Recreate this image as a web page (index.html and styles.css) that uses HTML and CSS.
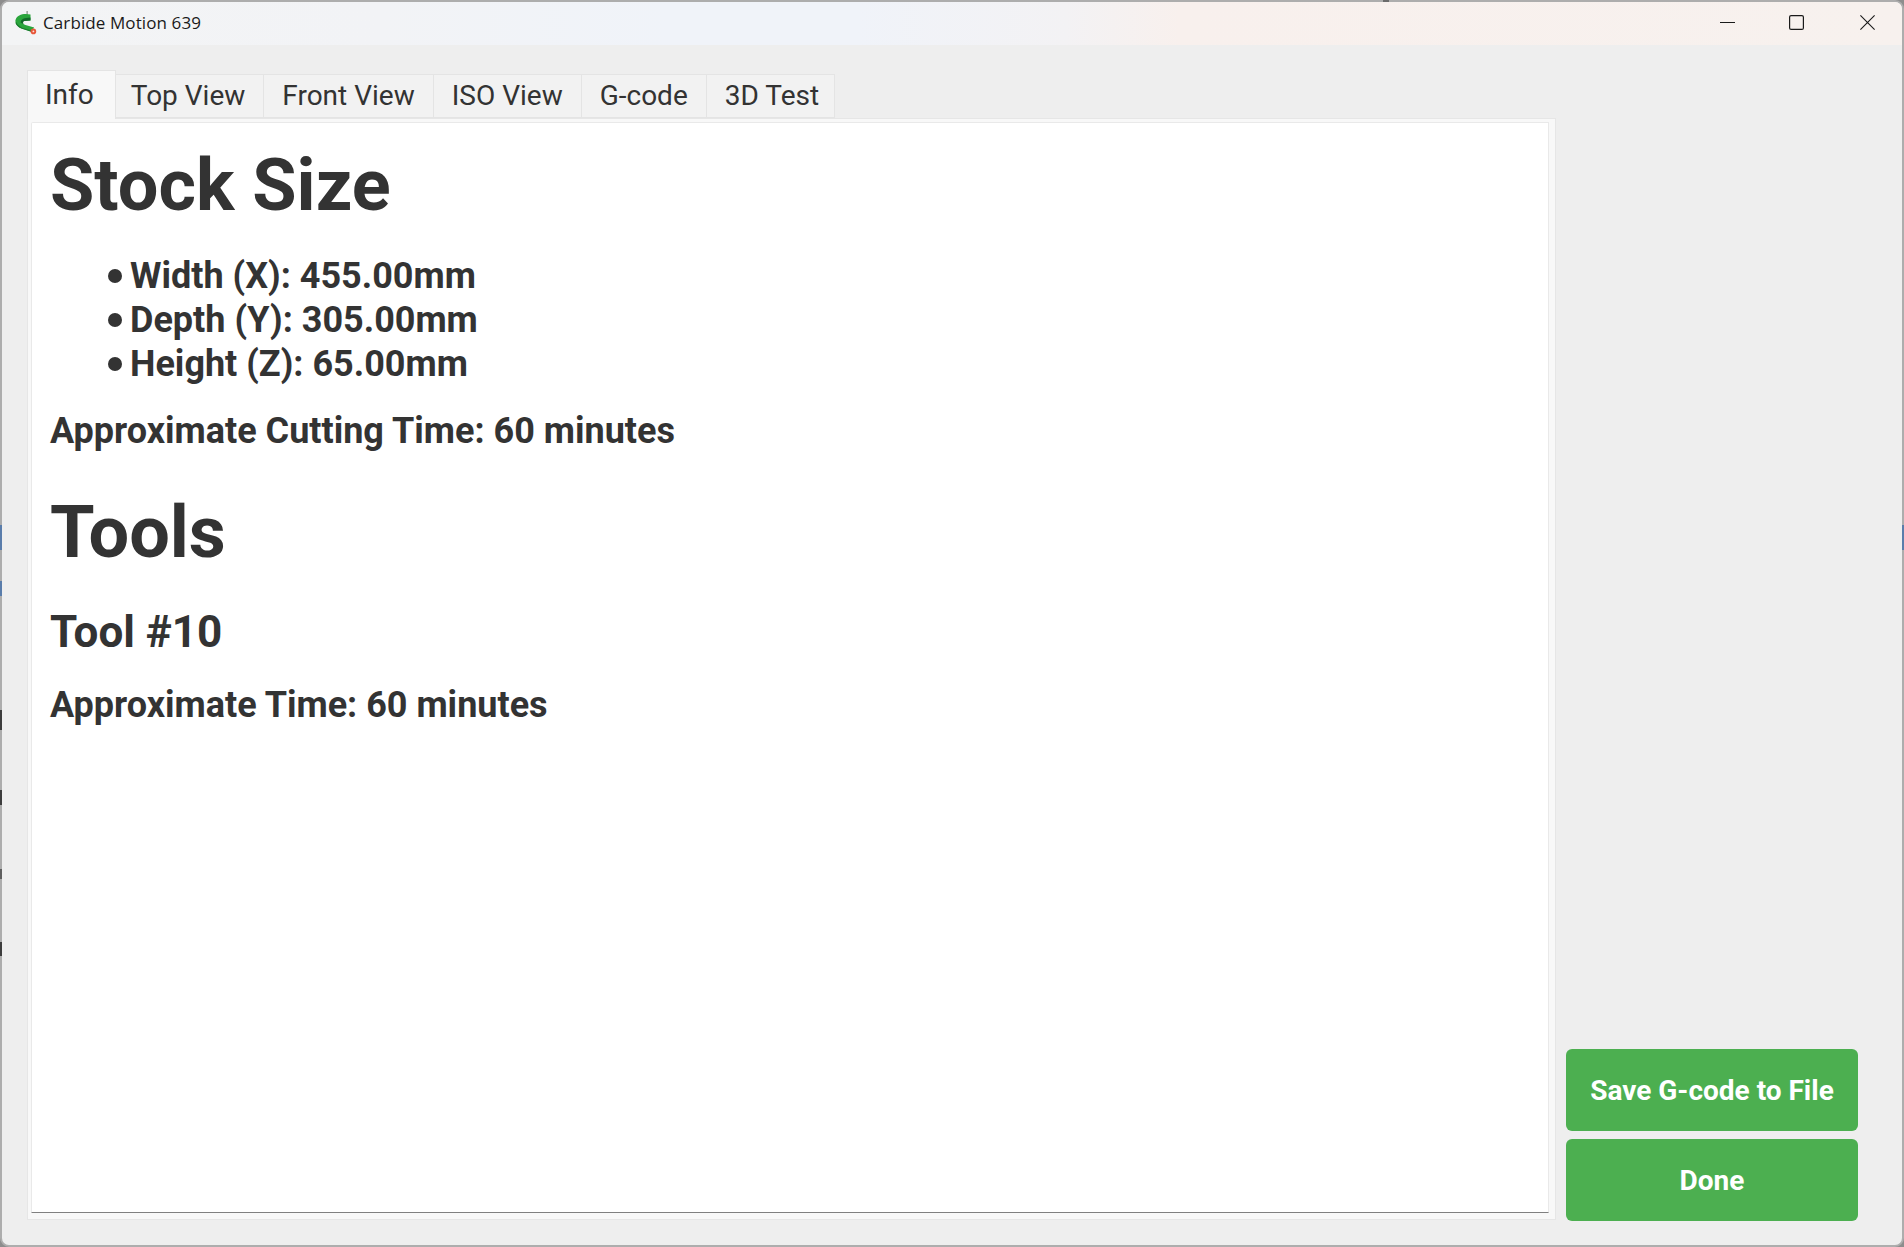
FILE: index.html
```html
<!DOCTYPE html>
<html lang="en">
<head>
<meta charset="utf-8">
<title>Carbide Motion 639</title>
<link rel="stylesheet" href="styles.css">
</head>
<body>
<div class="window">
  <header class="titlebar">
    <svg class="app-icon" viewBox="0 0 22 24" width="22" height="24" aria-hidden="true">
      <rect x="11.4" y="0" width="1.5" height="5" fill="#98a098"/>
      <path d="M15.5 3.6 C9 2.2 2 3.6 0.5 9 C-0.2 13 3 16 7 17.6 L16.2 20.4 L19.2 16.6 L10.5 14 C7.4 13 6.8 10.6 9 10 L15.5 9.4 Z" fill="#2aa53c"/>
      <path d="M5.6 11.5 C6 8.4 9 6.8 15.5 6.6 L15.5 9.4 L9.4 10 C7.8 10.5 7.6 12.2 8.8 13.2 Z" fill="#14692a"/>
      <path d="M1 11.5 C2 14.5 4 16 7 17.2 L16.2 20.1" stroke="#1a7d2d" stroke-width="1.2" fill="none"/>
      <circle cx="18.4" cy="20.4" r="2.8" fill="#e8573a"/>
      <circle cx="18.4" cy="20.4" r="0.9" fill="#fbe3dc"/>
    </svg>
    <span class="title">Carbide Motion 639</span>
    <div class="controls">
      <button class="ctl"><svg viewBox="0 0 15 15" width="15" height="15"><path d="M0 7.5H15" stroke="#1a1a1a" fill="none"/></svg></button>
      <button class="ctl"><svg viewBox="0 0 15 15" width="15" height="15"><rect x="0.6" y="0.6" width="13.8" height="13.8" rx="1.5" stroke="#1a1a1a" stroke-width="1.2" fill="none"/></svg></button>
      <button class="ctl ctl-close"><svg viewBox="0 0 15 15" width="15" height="15"><path d="M0.4 0.4L14.6 14.6M14.6 0.4L0.4 14.6" stroke="#1a1a1a" stroke-width="1.1" fill="none"/></svg></button>
    </div>
  </header>
  <main class="client">
    <section class="left">
      <nav class="tabs">
        <div class="tab active">Info</div>
        <div class="tab">Top View</div>
        <div class="tab">Front View</div>
        <div class="tab">ISO View</div>
        <div class="tab">G-code</div>
        <div class="tab">3D Test</div>
      </nav>
      <div class="panel">
        <article class="doc">
          <h1>Stock Size</h1>
          <ul>
            <li>Width (X): 455.00mm</li>
            <li>Depth (Y): 305.00mm</li>
            <li>Height (Z): 65.00mm</li>
          </ul>
          <p>Approximate Cutting Time: 60 minutes</p>
          <h1 class="second">Tools</h1>
          <h2>Tool #10</h2>
          <p class="tool-time">Approximate Time: 60 minutes</p>
        </article>
      </div>
    </section>
    <aside class="actions">
      <button class="btn">Save G-code to File</button>
      <button class="btn">Done</button>
    </aside>
  </main>
  <span class="mark mark-l1"></span>
  <span class="mark mark-l2"></span>
  <span class="mark mark-l3"></span>
  <span class="mark mark-l4"></span>
  <span class="mark mark-l5"></span>
  <span class="mark mark-l6"></span>
  <span class="mark mark-r1"></span>
  <span class="mark mark-t1"></span>
</div>
</body>
</html>
```
FILE: styles.css
```css
* { box-sizing: border-box; }
html, body { margin: 0; height: 100%; background: #8d8d8d; }
body { width: 1904px; height: 1247px; overflow: hidden; font-family: Roboto, sans-serif; position: relative; }
.window {
  width: 100%; height: 100%;
  border: 2px solid #adadad;
  border-radius: 9px;
  background: #eee;
  display: flex; flex-direction: column;
  overflow: hidden;
}
.titlebar {
  height: 43px; flex: none;
  display: flex; align-items: center;
  background: linear-gradient(90deg, #f3f4f5 0%, #f2f3f6 20%, #f0f3f9 35%, #f0f3f9 45%, #f3f2f4 56%, #f8f0ed 62%, #f7f1ee 100%);
  padding-left: 13px;
}
.app-icon { flex: none; margin: 0 6px 2px 0; }
.title { font-family: "Open Sans", sans-serif; font-size: 17px; letter-spacing: 0.1px; color: #1a1a1a; padding-bottom: 2px; }
.controls { margin-left: auto; display: flex; gap: 54px; padding: 0 27px 2px 0; }
.ctl { width: 15px; height: 15px; border: 0; background: none; padding: 0; display: flex; }
.ctl-close { margin-left: 2px; }
.client { flex: 1; display: flex; padding: 25px 44px 24px 25px; gap: 10px; min-height: 0; }
.left { width: 1529px; flex: none; display: flex; flex-direction: column; min-width: 0; padding-bottom: 1px; }
.tabs { display: flex; align-items: flex-end; height: 48px; flex: none; }
.tab {
  height: 44px;
  padding: 0 18px;
  background: #f2f2f2;
  border: 1px solid #e4e4e4;
  border-left: 0;
  font-size: 28px; line-height: 42px; color: #333;
}
.tab:last-child { padding-right: 15px; }
.tab.active + .tab { padding-left: 15px; }
.tab.active {
  height: 49px; margin-bottom: -1px;
  position: relative; z-index: 1;
  background: #f8f8f8;
  padding: 0 21px 0 17px;
  border-left: 1px solid #e4e4e4; border-bottom: 0;
  line-height: 47px;
}
.panel { flex: 1; background: #f8f8f8; border: 1px solid #e6e6e6; padding: 3px 6px 6px 3px; min-height: 0; }
.doc {
  height: 100%; background: #fff;
  border: 1px solid #e9e9e9;
  border-bottom: 1px solid #808080;
  border-top-left-radius: 2px;
  padding: 0 18px; color: #333; font-weight: 700; overflow: hidden;
}
h1 { font-size: 72px; line-height: 84px; margin: 21px 0 0; }
h1.second { margin-top: 38px; }
h2 { font-size: 44px; line-height: 52px; margin: 31px 0 0; }
ul { margin: 26px 0 0; padding: 0 0 0 58px; font-size: 36px; line-height: 44px; list-style: none; }
li { position: relative; padding-left: 22px; }
li::before { content: ""; position: absolute; left: 0; top: 15px; width: 14px; height: 14px; border-radius: 50%; background: #333; }
p { font-size: 36px; line-height: 44px; margin: 23px 0 0; }
p.tool-time { margin-top: 25px; }
.actions { flex: none; width: 292px; display: flex; flex-direction: column; justify-content: flex-end; gap: 8px; }
.btn { height: 82px; border: 0; border-radius: 6px; background: #4caf50; color: #fff; font: 700 28px Roboto, sans-serif; }
.mark { position: absolute; width: 2px; left: 0; background: #3d3d3d; }
.mark-l1 { top: 525px; height: 25px; background: #5a7dab; }
.mark-l2 { top: 581px; height: 15px; background: #5a7dab; }
.mark-l3 { top: 710px; height: 20px; }
.mark-l4 { top: 790px; height: 15px; }
.mark-l5 { top: 869px; height: 10px; background: #5f5f5f; }
.mark-l6 { top: 942px; height: 14px; }
.mark-r1 { top: 525px; height: 25px; left: auto; right: 0; background: #5a7dab; }
.mark-t1 { top: 0; left: 1383px; width: 6px; height: 2px; background: #6b6b6b; }
```
